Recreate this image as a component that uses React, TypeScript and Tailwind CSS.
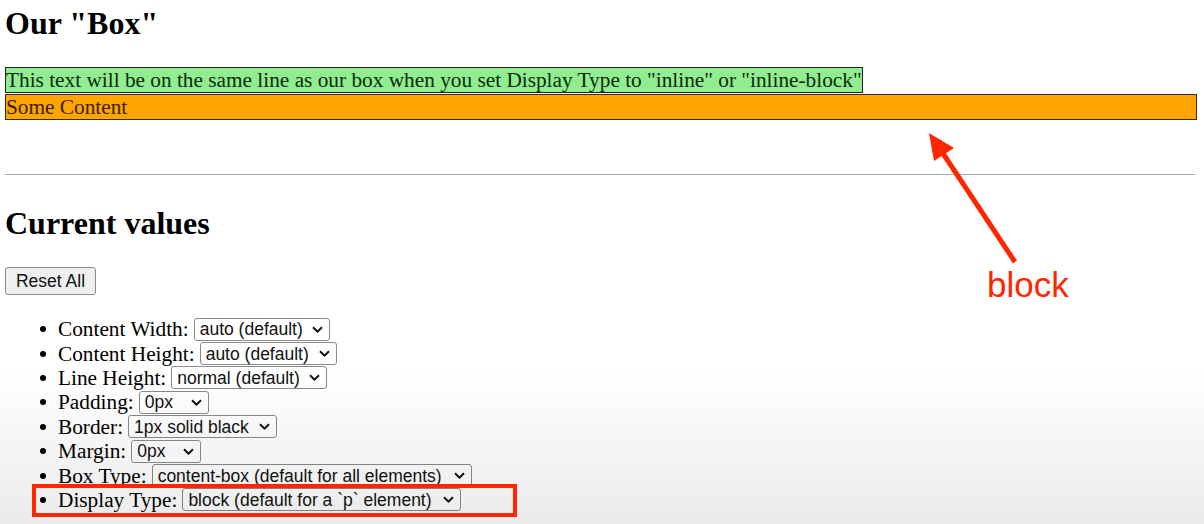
const rows = [
  { label: 'Content Width:', value: 'auto (default)', width: 'w-[136px]' },
  { label: 'Content Height:', value: 'auto (default)', width: 'w-[137px]' },
  { label: 'Line Height:', value: 'normal (default)', width: 'w-[156px]' },
  { label: 'Padding:', value: '0px', width: 'w-[70px]' },
  { label: 'Border:', value: '1px solid black', width: 'w-[149px]' },
  { label: 'Margin:', value: '0px', width: 'w-[70px]' },
  { label: 'Box Type:', value: 'content-box (default for all elements)', width: 'w-[320px]' },
  { label: 'Display Type:', value: 'block (default for a `p` element)', width: 'w-[279px]' },
]

function Chevron() {
  return (
    <svg width="11" height="7" viewBox="0 0 11 7" className="shrink-0">
      <path d="M1 1.2 L5.5 5.6 L10 1.2" fill="none" stroke="#111" strokeWidth="2" />
    </svg>
  )
}

function FakeSelect({ value, width }: { value: string; width: string }) {
  return (
    <span
      className={`${width} h-[23px] flex items-center justify-between pl-[5px] pr-[6px] border border-[#8a8a8a] rounded-[3px] bg-white font-['Liberation_Sans',Arial,sans-serif] text-[17.5px] leading-[20px] text-[#111] whitespace-nowrap`}
    >
      <span>{value}</span>
      <Chevron />
    </span>
  )
}

export default function App() {
  return (
    <div className="relative w-[1204px] h-[524px] overflow-hidden bg-white pl-[5px] pr-[7px] font-['Liberation_Serif',serif] text-black">
      <h2 className="mt-[6px] text-[32px] leading-[34px] font-bold">Our "Box"</h2>

      <div className="mt-[27px]">
        <span className="inline-block border border-[#222] bg-[#90ee90] text-[21.3px] leading-[24px] text-[#0b2a0b]">
          This text will be on the same line as our box when you set Display Type to "inline" or "inline-block"
        </span>
        <p className="border border-[#3a2a10] bg-[#ffa500] text-[21.3px] leading-[24px] text-[#3a2200]">Some Content</p>
      </div>

      <hr className="mt-[54px] mr-[2px] border-t border-[#ababab]" />

      <h2 className="mt-[31px] text-[32px] leading-[34px] font-bold">Current values</h2>

      <button className="mt-[27px] block w-[91px] h-[28px] border border-[#8a8a8a] rounded-[3px] bg-[#efefef] font-['Liberation_Sans',Arial,sans-serif] text-[17.5px] leading-[20px] text-[#111]">
        Reset All
      </button>

      <ul className="mt-[22px]">
        {rows.map((r) => (
          <li key={r.label} className="flex items-center h-[24.4px] pl-[35px] text-[21.3px] leading-[24px]">
            <span className="w-[6px] h-[6px] rounded-full bg-black shrink-0" />
            <span className="ml-[12px] mr-[5px] whitespace-nowrap">{r.label}</span>
            <FakeSelect value={r.value} width={r.width} />
          </li>
        ))}
      </ul>

      {/* annotation overlays */}
      <div className="pointer-events-none absolute left-0 right-0 bottom-0 h-[155px] bg-linear-to-b from-black/0 to-black/[0.08]" />

      <div className="pointer-events-none absolute left-[32px] top-[484px] w-[485px] h-[33px] border-[4px] border-[#ff2600]" />

      <svg className="pointer-events-none absolute left-0 top-0" width="1204" height="524">
        <line x1="1015" y1="262" x2="942" y2="152" stroke="#ff2600" strokeWidth="5" />
        <polygon points="929,133 954,148 934,161" fill="#ff2600" />
      </svg>

      <span className="pointer-events-none absolute left-[987px] top-[267px] font-['Liberation_Sans',Arial,sans-serif] text-[35px] leading-[35px] text-[#ff2600]">
        block
      </span>
    </div>
  )
}
